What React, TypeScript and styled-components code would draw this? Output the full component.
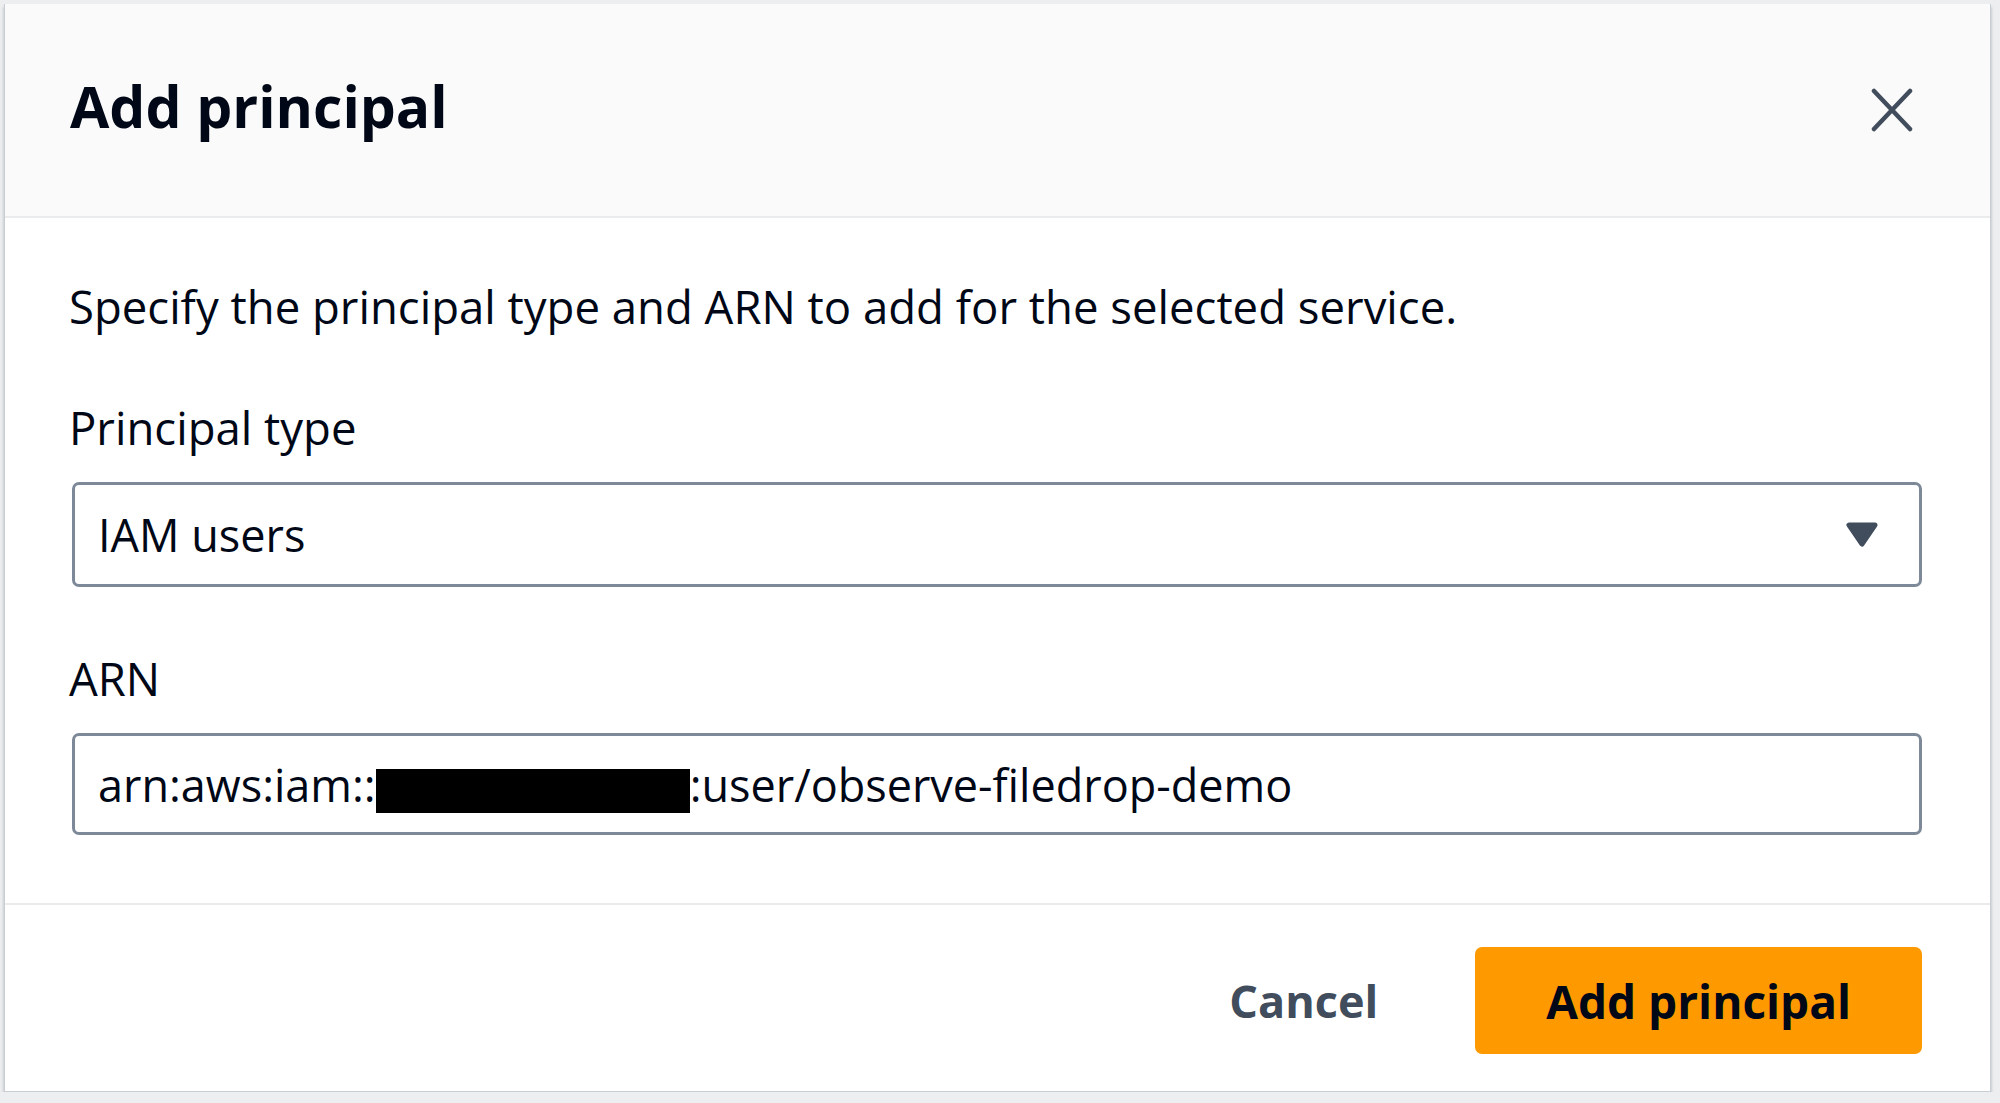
import React from 'react';
import styled, { createGlobalStyle } from 'styled-components';

const GlobalStyle = createGlobalStyle`
  html, body {
    margin: 0;
    padding: 0;
    background: #eceeef;
  }
  body {
    font-family: "Open Sans", "Noto Sans", sans-serif;
    color: #000716;
  }
  * {
    box-sizing: border-box;
  }
`;

const Modal = styled.div`
  width: 1987px;
  margin: 4px 0 0 4px;
  background: #ffffff;
  border: 1px solid #c9ced4;
  border-top: none;
  box-shadow: 0 3px 3px rgba(65, 77, 92, 0.35);
  display: flex;
  flex-direction: column;
`;

const Header = styled.header`
  height: 214px;
  padding: 62px 76px 0 65px;
  background: #fafafa;
  border-bottom: 2px solid #e9ebed;
  display: flex;
  align-items: flex-start;
  justify-content: space-between;
`;

const Title = styled.h2`
  margin: 0;
  font-size: 57px;
  line-height: 80px;
  font-weight: 700;
  color: #000716;
`;

const CloseButton = styled.button`
  margin-top: 22px;
  padding: 0;
  border: none;
  background: none;
  width: 44px;
  height: 44px;
  display: flex;
  align-items: center;
  justify-content: center;
  cursor: pointer;
`;

const Body = styled.section`
  padding: 58px 68px 68px 64px;
  display: flex;
  flex-direction: column;
  gap: 61px;
`;

const Description = styled.p`
  margin: 0;
  font-size: 45.5px;
  line-height: 60px;
  color: #000716;
`;

const Field = styled.div`
  display: flex;
  flex-direction: column;
  gap: 25px;
`;

const Label = styled.label`
  font-size: 45.5px;
  line-height: 60px;
  color: #000716;
`;

const Control = styled.div<{ $height: number }>`
  height: ${({ $height }) => $height}px;
  margin-left: 3px;
  padding: 0 40px 0 23px;
  border: 3px solid #7d8998;
  border-radius: 7px;
  background: #ffffff;
  display: flex;
  align-items: center;
  justify-content: space-between;
  font-size: 45px;
  color: #000716;
  white-space: nowrap;
`;

const Redacted = styled.span`
  display: inline-block;
  width: 314px;
  height: 44px;
  background: #000000;
  vertical-align: -11px;
`;

const Footer = styled.footer`
  border-top: 2px solid #e9ebed;
  padding: 42px 68px 37px 68px;
  display: flex;
  justify-content: flex-end;
  align-items: center;
  gap: 26px;
`;

const Button = styled.button<{ $primary?: boolean }>`
  height: 107px;
  padding: 0 71px;
  border: none;
  border-radius: 7px;
  background: ${({ $primary }) => ($primary ? '#ff9900' : 'transparent')};
  color: ${({ $primary }) => ($primary ? '#000716' : '#414d5c')};
  font-family: "Open Sans", "Noto Sans", sans-serif;
  font-size: ${({ $primary }) => ($primary ? 46 : 45)}px;
  font-weight: 700;
  cursor: pointer;
`;

const CloseIcon = () => (
  <svg width="44" height="44" viewBox="0 0 44 44">
    <path d="M4 3 L40 41 M40 3 L4 41" stroke="#414d5c" strokeWidth="4.5" strokeLinecap="round" fill="none" />
  </svg>
);

const Caret = () => (
  <svg width="34" height="26" viewBox="0 0 34 26">
    <path d="M4 3 H30 L17 22 Z" fill="#414d5c" stroke="#414d5c" strokeWidth="5" strokeLinejoin="round" />
  </svg>
);

const App: React.FC = () => {
  return (
    <>
      <GlobalStyle />
      <Modal>
        <Header>
          <Title>Add principal</Title>
          <CloseButton aria-label="Close">
            <CloseIcon />
          </CloseButton>
        </Header>

        <Body>
          <Description>
            Specify the principal type and ARN to add for the selected service.
          </Description>

          <Field>
            <Label>Principal type</Label>
            <Control $height={105}>
              <span>IAM users</span>
              <Caret />
            </Control>
          </Field>

          <Field>
            <Label>ARN</Label>
            <Control $height={102}>
              <span>
                arn:aws:iam::<Redacted />:user/observe-filedrop-demo
              </span>
            </Control>
          </Field>
        </Body>

        <Footer>
          <Button>Cancel</Button>
          <Button $primary>Add principal</Button>
        </Footer>
      </Modal>
    </>
  );
};

export default App;
